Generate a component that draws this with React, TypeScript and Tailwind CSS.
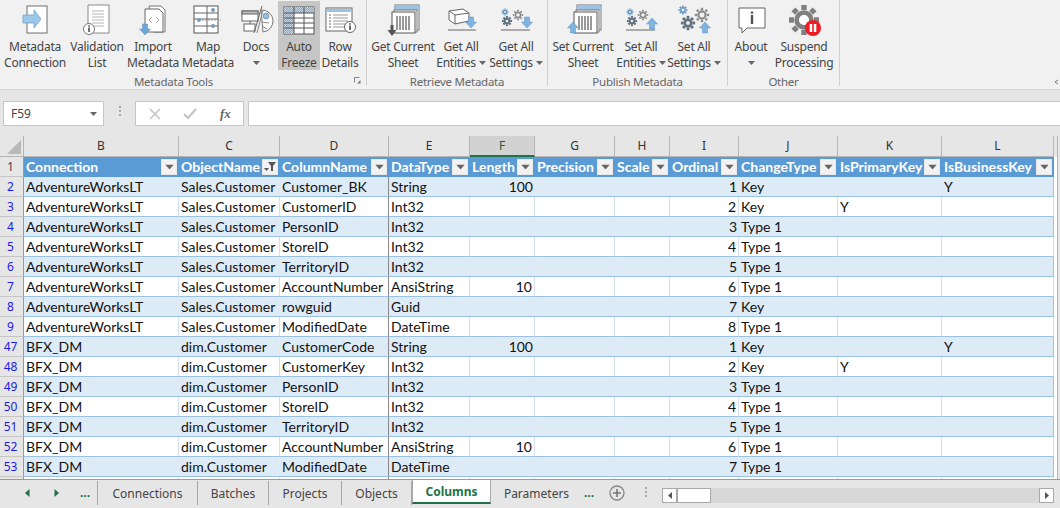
import React from "react";

const ui = "font-['Noto_Sans',sans-serif]";
const cellFont = "font-['Lato',sans-serif]";

const Caret = ({ className = "" }: { className?: string }) => (
  <svg width="7" height="4" viewBox="0 0 7 4" className={className}>
    <path d="M0 0h7L3.5 4z" fill="#666" />
  </svg>
);

const I = ({ children }: { children: React.ReactNode }) => (
  <svg width="40" height="38" viewBox="0 1 40 38">{children}</svg>
);

const gear = (cx: number, cy: number, r: number, stroke: string, sw: number) => {
  const teeth = [];
  for (let i = 0; i < 8; i++) {
    const a = (i * Math.PI) / 4;
    teeth.push(
      <line key={i} x1={cx + Math.cos(a) * r} y1={cy + Math.sin(a) * r} x2={cx + Math.cos(a) * (r + sw)} y2={cy + Math.sin(a) * (r + sw)} stroke={stroke} strokeWidth={sw * 1.1} />
    );
  }
  return (
    <g>
      {teeth}
      <circle cx={cx} cy={cy} r={r * 0.72} fill="#f1f1f1" stroke={stroke} strokeWidth={sw} />
    </g>
  );
};

const ArrowDown = ({ x, y, c = "#7fb4e0" }: { x: number; y: number; c?: string }) => (
  <path d={`M${x - 2.5} ${y}h5v5h3l-5.5 6-5.5-6h3z`} fill={c} stroke="#5d93c4" strokeWidth=".5" />
);
const ArrowUp = ({ x, y, c = "#7fb4e0" }: { x: number; y: number; c?: string }) => (
  <path d={`M${x - 2.5} ${y + 11}h5v-5h3l-5.5-6-5.5 6h3z`} fill={c} stroke="#5d93c4" strokeWidth=".5" />
);

const Sheet = ({ dx, arrow }: { dx: number; arrow?: React.ReactNode }) => (
  <I>
    <rect x={dx + 3} y="5" width="24" height="25" fill="#fff" stroke="#777" />
    <rect x={dx + 3} y="6" width="24" height="4" fill="#9cc3e5" />
    <rect x={dx + 2} y="10" width="23" height="22" fill="#fff" stroke="#777" />
    <rect x={dx} y="12" width="23" height="21" fill="#fff" stroke="#555" />
    {[5, 8, 11, 14, 17].map((x) => (
      <line key={x} x1={dx + x} x2={dx + x} y1="16" y2="30" stroke="#555" strokeWidth="1.2" />
    ))}
    {arrow}
  </I>
);

const Cube = () => (
  <g fill="#fff" stroke="#666">
    <path d="M4 7l14-2 6 4v8l-14 3-6-4z" />
    <path d="M4 7l6 4v9M10 11l14-2" fill="none" />
  </g>
);

const Gears = () => (
  <g>
    {gear(9, 12, 2.2, "#5d93c4", 1.2)}
    {gear(22, 15, 3.6, "#8a8a8a", 1.6)}
    {gear(11, 21, 3.2, "#5f6f7d", 1.9)}
  </g>
);

const icons: Record<string, React.ReactNode> = {
  conn: (
    <I>
      <rect x="12" y="6" width="20" height="27" fill="#fff" stroke="#6e6e6e" />
      <path d="M8 15h11v-5l7 9-7 9v-5H8z" fill="#9cc8ea" stroke="#6fa3cf" strokeWidth=".8" />
    </I>
  ),
  valid: (
    <I>
      <path d="M11 5h21v28H11z" fill="#fff" stroke="#8a8a8a" />
      {[11, 14, 17, 20, 23, 26].map((y) => (
        <line key={y} x1="15" x2="27" y1={y} y2={y} stroke="#b5b5b5" />
      ))}
      <circle cx="12" cy="29" r="5.5" fill="#fff" stroke="#777" />
      <rect x="11.2" y="27.5" width="1.7" height="4.5" fill="#555" />
      <rect x="11.2" y="25.3" width="1.7" height="1.4" fill="#555" />
    </I>
  ),
  imp: (
    <I>
      <path d="M16 6h12l4 4v22H20z" fill="#fff" stroke="#777" />
      <path d="M12 9h14l4 4v19H12z" fill="#fff" stroke="#666" />
      <path d="M19 17l-3 3 3 3M23 17l3 3-3 3" fill="none" stroke="#aaa" />
      <ArrowDown x={12} y={24} c="#6fa5d6" />
    </I>
  ),
  map: (
    <I>
      <rect x="6" y="6" width="24" height="27" fill="#fff" stroke="#555" />
      <path d="M6 13h24M6 19h24M6 26h24M19 6v27" stroke="#666" fill="none" />
      <line x1="11" x2="33" y1="20" y2="20" stroke="#999" strokeDasharray="2 1" />
      <circle cx="11" cy="20" r="2" fill="#6f9cc2" />
      <circle cx="25" cy="10" r="2" fill="#6f9cc2" />
      <circle cx="25" cy="26" r="2" fill="#6f9cc2" />
    </I>
  ),
  docs: (
    <I>
      <rect x="6" y="11" width="16" height="10" fill="#fff" stroke="#666" />
      <rect x="6" y="11" width="16" height="3" fill="#bbb" stroke="#666" />
      <rect x="8" y="24" width="11" height="7" fill="#fff" stroke="#666" />
      <path d="M14 21v3" stroke="#666" />
      <path d="M25 10a11 11 0 0 1 2 22z" fill="#fff" stroke="#777" />
      <line x1="18" y1="33" x2="26" y2="6" stroke="#666" />
      <line x1="21" y1="33" x2="27" y2="10" stroke="#888" />
      <circle cx="30" cy="16" r="3" fill="#8fbde3" stroke="#666" strokeWidth=".5" />
      <path d="M26 22l7 1M26 26l5 3" stroke="#888" />
    </I>
  ),
  freeze: (
    <I>
      <defs>
        <pattern id="hatch" width="2" height="2" patternUnits="userSpaceOnUse">
          <rect width="2" height="2" fill="#c4d6e6" />
          <rect width="1" height="1" fill="#8fa7bd" />
          <rect x="1" y="1" width="1" height="1" fill="#8fa7bd" />
        </pattern>
      </defs>
      <rect x="5" y="7" width="30" height="27" fill="#fff" stroke="#555" />
      <rect x="5" y="7" width="30" height="6" fill="url(#hatch)" />
      <rect x="5" y="13" width="10" height="21" fill="url(#hatch)" />
      <path d="M5 13h30M5 18h30M5 23h30M5 28h30M15 7v27M25 7v27" stroke="#555" fill="none" />
    </I>
  ),
  row: (
    <I>
      <rect x="6" y="8" width="26" height="23" fill="#fff" stroke="#666" />
      <rect x="6" y="9" width="26" height="3" fill="#9cc3e5" />
      {[15, 18, 21, 24, 27].map((y) => (
        <g key={y}>
          <line x1="9" x2="11" y1={y} y2={y} stroke="#666" />
          <line x1="13" x2="28" y1={y} y2={y} stroke="#999" />
        </g>
      ))}
      <circle cx="30" cy="27" r="5.5" fill="#fff" stroke="#666" />
      <rect x="29.2" y="25.5" width="1.7" height="4.5" fill="#555" />
      <rect x="29.2" y="23.3" width="1.7" height="1.4" fill="#555" />
    </I>
  ),
  getSheet: <Sheet dx={9} arrow={<path d="M7.5 25h3v5h3l-4.5 6-4.5-6h3z" fill="#555" />} />,
  getEnt: (
    <I>
      <g transform="translate(4 4)"><Cube /></g>
      <ArrowDown x={30} y={17} />
      <line x1="7" x2="35" y1="30" y2="30" stroke="#666" />
    </I>
  ),
  getSet: (
    <I>
      <Gears />
      <ArrowDown x={31} y={17} />
      <line x1="5" x2="34" y1="30" y2="30" stroke="#666" />
    </I>
  ),
  setSheet: <Sheet dx={11} arrow={<ArrowUp x={10} y={22} />} />,
  setEnt: (
    <I>
      <Gears />
      <ArrowUp x={31} y={18} />
      <line x1="5" x2="34" y1="30" y2="30" stroke="#666" />
    </I>
  ),
  setSet: (
    <I>
      {gear(9, 10, 3, "#5d93c4", 1.5)}
      {gear(28, 15, 5, "#8a8a8a", 2.2)}
      {gear(14, 23, 4.5, "#5f6f7d", 2.6)}
      <ArrowUp x={31} y={22} />
    </I>
  ),
  about: (
    <I>
      <path d="M8 8h26v20H16l-5 5v-5H8z" fill="#fff" stroke="#666" />
      <rect x="19.8" y="15" width="2.4" height="9" fill="#555" />
      <rect x="19.8" y="11.5" width="2.4" height="2.2" fill="#555" />
    </I>
  ),
  suspend: (
    <I>
      {gear(20, 20, 10, "#808080", 5)}
      <circle cx="20" cy="20" r="5" fill="#fff" />
      <circle cx="29" cy="28" r="8" fill="#ee1c25" />
      <rect x="25.7" y="24" width="2.5" height="8" fill="#fff" />
      <rect x="29.8" y="24" width="2.5" height="8" fill="#fff" />
    </I>
  ),
};

type Btn = { icon: string; l1: string; l2?: string; caret?: "below" | "inline"; w: string; ml?: string; active?: boolean };

const RibbonBtn = ({ b }: { b: Btn }) => (
  <div className={`flex flex-col items-center h-[70px] shrink-0 border-t border-t-[#f1f1f1] ${b.w} ${b.ml ?? ""} ${b.active ? "bg-[#c6c6c6]" : ""}`}>
    <div className="h-[38px] flex items-center justify-center">{icons[b.icon]}</div>
    <div className="h-[16px] leading-[16px] whitespace-nowrap">{b.l1}</div>
    <div className="h-[16px] leading-[16px] whitespace-nowrap flex items-center gap-[3px]">
      {b.l2}
      {b.caret && <Caret />}
    </div>
  </div>
);

const Group = ({ label, w, btns, launcher, labelPad }: { label: string; w: string; btns: Btn[]; launcher?: boolean; labelPad?: string }) => (
  <div className={`relative flex flex-col shrink-0 h-[86px] border-r border-[#d0d0d0] ${w}`}>
    <div className="flex">
      {btns.map((b) => (
        <RibbonBtn key={b.icon} b={b} />
      ))}
    </div>
    <div className={`text-center text-[11.5px] leading-[14px] mt-[5px] text-[#666] ${labelPad ?? ""}`}>{label}</div>
    {launcher && (
      <svg width="7" height="7" viewBox="0 0 7 7" className="absolute right-[5px] bottom-[2px]">
        <path d="M.5 .5h5M.5 .5v5" stroke="#888" fill="none" />
        <path d="M3 6.5h3.5V3z" fill="#777" />
      </svg>
    )}
  </div>
);

const Ribbon = () => (
  <div className={`${ui} h-[90px] bg-[#f1f1f1] border-b border-[#d4d4d4] text-[12px] tracking-[-0.25px] text-[#444] flex relative`}>
    <Group
      label="Metadata Tools"
      w="w-[367px]"
      labelPad="pr-[19px]"
      launcher
      btns={[
        { icon: "conn", l1: "Metadata", l2: "Connection", w: "w-[70px]" },
        { icon: "valid", l1: "Validation", l2: "List", w: "w-[54px]" },
        { icon: "imp", l1: "Import", l2: "Metadata", w: "w-[58px]" },
        { icon: "map", l1: "Map", l2: "Metadata", w: "w-[52px]" },
        { icon: "docs", l1: "Docs", caret: "below", w: "w-[44px]" },
        { icon: "freeze", l1: "Auto", l2: "Freeze", w: "w-[42px]", active: true },
        { icon: "row", l1: "Row", l2: "Details", w: "w-[40px]" },
      ]}
    />
    <Group
      label="Retrieve Metadata"
      w="w-[181px]"
      btns={[
        { icon: "getSheet", l1: "Get Current", l2: "Sheet", w: "w-[58px]", ml: "ml-[7px]" },
        { icon: "getEnt", l1: "Get All", l2: "Entities", caret: "inline", w: "w-[58px]" },
        { icon: "getSet", l1: "Get All", l2: "Settings", caret: "inline", w: "w-[52px]" },
      ]}
    />
    <Group
      label="Publish Metadata"
      w="w-[180px]"
      btns={[
        { icon: "setSheet", l1: "Set Current", l2: "Sheet", w: "w-[56px]", ml: "ml-[7px]" },
        { icon: "setEnt", l1: "Set All", l2: "Entities", caret: "inline", w: "w-[60px]" },
        { icon: "setSet", l1: "Set All", l2: "Settings", caret: "inline", w: "w-[46px]" },
      ]}
    />
    <Group
      label="Other"
      w="w-[112px]"
      btns={[
        { icon: "about", l1: "About", caret: "below", w: "w-[46px]" },
        { icon: "suspend", l1: "Suspend", l2: "Processing", w: "w-[60px]" },
      ]}
    />
    <svg width="6" height="6" viewBox="0 0 6 6" className="absolute right-0 bottom-[4px]">
      <path d="M4 1L1 3l3 2" stroke="#777" fill="none" />
    </svg>
  </div>
);

const FormulaBar = () => (
  <div className={`${ui} h-[46px] bg-[#e6e6e6] flex items-start pt-[11px] text-[#444]`}>
    <div className="ml-[3px] w-[101px] h-[25px] bg-white border border-[#c6c6c6] flex items-center justify-between pl-[7px] pr-[6px] text-[12px]">
      F59
      <Caret />
    </div>
    <div className="w-[31px] flex justify-center pt-[5px]">
      <div className="flex flex-col gap-[2px]">
        <div className="w-[2px] h-[2px] bg-[#a8a8a8]" />
        <div className="w-[2px] h-[2px] bg-[#a8a8a8]" />
        <div className="w-[2px] h-[2px] bg-[#a8a8a8]" />
      </div>
    </div>
    <div className="w-[109px] h-[25px] bg-white border border-[#c6c6c6] flex items-center">
      <svg width="12" height="12" viewBox="0 0 12 12" className="ml-[13px]">
        <path d="M1 1l10 10M11 1L1 11" stroke="#c2c2c2" strokeWidth="1.5" />
      </svg>
      <svg width="14" height="12" viewBox="0 0 14 12" className="ml-[22px]">
        <path d="M1 6l4 4 8-9" stroke="#c2c2c2" strokeWidth="2" fill="none" />
      </svg>
      <span className="ml-[23px] text-[13px] italic text-[#666] font-['Liberation_Serif',serif] font-bold">fx</span>
    </div>
    <div className="ml-[4px] flex-1 h-[25px] bg-white border-y border-l border-[#c6c6c6]" />
  </div>
);

const gridCols = "grid grid-cols-[24px_155px_101px_109px_81px_65px_80px_55px_69px_99px_104px_112px_1fr]";

const cols = ["B", "C", "D", "E", "F", "G", "H", "I", "J", "K", "L"];
const heads = ["Connection", "ObjectName", "ColumnName", "DataType", "Length", "Precision", "Scale", "Ordinal", "ChangeType", "IsPrimaryKey", "IsBusinessKey"];

const aw = "AdventureWorksLT";
const sc = "Sales.Customer";
const bf = "BFX_DM";
const dc = "dim.Customer";
const rows: [number, string, string, string, string, string, string, string, string, string][] = [
  [2, aw, sc, "Customer_BK", "String", "100", "1", "Key", "", "Y"],
  [3, aw, sc, "CustomerID", "Int32", "", "2", "Key", "Y", ""],
  [4, aw, sc, "PersonID", "Int32", "", "3", "Type 1", "", ""],
  [5, aw, sc, "StoreID", "Int32", "", "4", "Type 1", "", ""],
  [6, aw, sc, "TerritoryID", "Int32", "", "5", "Type 1", "", ""],
  [7, aw, sc, "AccountNumber", "AnsiString", "10", "6", "Type 1", "", ""],
  [8, aw, sc, "rowguid", "Guid", "", "7", "Key", "", ""],
  [9, aw, sc, "ModifiedDate", "DateTime", "", "8", "Type 1", "", ""],
  [47, bf, dc, "CustomerCode", "String", "100", "1", "Key", "", "Y"],
  [48, bf, dc, "CustomerKey", "Int32", "", "2", "Key", "Y", ""],
  [49, bf, dc, "PersonID", "Int32", "", "3", "Type 1", "", ""],
  [50, bf, dc, "StoreID", "Int32", "", "4", "Type 1", "", ""],
  [51, bf, dc, "TerritoryID", "Int32", "", "5", "Type 1", "", ""],
  [52, bf, dc, "AccountNumber", "AnsiString", "10", "6", "Type 1", "", ""],
  [53, bf, dc, "ModifiedDate", "DateTime", "", "7", "Type 1", "", ""],
];

const FilterBtn = ({ filtered }: { filtered?: boolean }) => (
  <div className="w-[16px] h-[16px] bg-[#f2f2f2] border border-[#e8e8e8] flex items-center justify-center shrink-0 mr-[1px]">
    {filtered ? (
      <svg width="13" height="11" viewBox="0 0 13 11">
        <path d="M0 7h5L2.5 10z" fill="#555" />
        <path d="M4 1h8L9 5v5H7V5z" fill="#555" />
      </svg>
    ) : (
      <Caret className="scale-125" />
    )}
  </div>
);

const Cell = ({ t, right, odd, last, dark }: { t: string; right?: boolean; odd: boolean; last?: boolean; dark?: boolean }) => (
  <div
    className={`h-[20px] border-b border-[#9bc2e6] overflow-visible whitespace-nowrap leading-[19px] px-[2px] ${right ? "text-right" : ""} ${
      dark ? "border-r border-r-[#8a8a8a]" : odd ? "" : "border-r border-r-[#d3dfee]"
    } ${last ? "border-r border-r-[#9bc2e6]" : ""} ${odd ? "bg-[#ddebf7]" : "bg-white"}`}
  >
    {t}
  </div>
);

const RowHead = ({ n, color }: { n: string; color: string }) => (
  <div className={`${ui} h-[20px] pr-[2px] bg-[#e6e6e6] border-r border-b border-r-[#9a9a9a] border-b-[#c6c6c6] text-[12px] leading-[19px] text-center ${color}`}>{n}</div>
);

const Filler = ({ head }: { head?: boolean }) => (
  <div className={`flex bg-[#e6e6e6] ${head ? "h-[21px]" : "h-[20px]"}`}>
    <div className={`w-[3px] ${head ? "bg-[#e6e6e6]" : "bg-white"}`} />
    <div className="w-px bg-[#b4b4b4]" />
  </div>
);

const Grid = () => (
  <div className={`${cellFont} h-[344px] overflow-hidden bg-white border-b border-[#9a9a9a] text-[14px] text-[#111]`}>
    <div className={gridCols}>
      <div className="h-[21px] bg-[#e6e6e6] border-r border-b border-[#b4b4b4] flex items-end justify-end p-[2px]">
        <svg width="14" height="14" viewBox="0 0 14 14">
          <path d="M14 0v14H0z" fill="#b9b9b9" />
        </svg>
      </div>
      {cols.map((c) => (
        <div
          key={c}
          className={`${ui} h-[21px] text-[12px] leading-[20px] text-center border-r border-[#b4b4b4] ${
            c === "F" ? "bg-[#d2d2d2] border-b-2 border-b-[#217346] text-[#1d5c3c]" : "bg-[#e6e6e6] border-b border-b-[#b4b4b4] text-[#333]"
          }`}
        >
          {c}
        </div>
      ))}
      <Filler head />

      <RowHead n="1" color="text-[#444]" />
      {heads.map((h, i) => (
        <div key={h} className="h-[20px] pb-[1px] bg-[#5b9bd5] text-white font-bold flex items-center justify-between pl-[2px] overflow-hidden border-r border-[#5b9bd5] whitespace-nowrap">
          <span>{h}</span>
          <FilterBtn filtered={i === 1} />
        </div>
      ))}
      <Filler />

      {rows.map((r, i) => {
        const odd = i % 2 === 0;
        return (
          <React.Fragment key={r[0]}>
            <RowHead n={String(r[0])} color="text-[#1a1ae6]" />
            <Cell t={r[1]} odd={odd} />
            <Cell t={r[2]} odd={odd} />
            <Cell t={r[3]} odd={odd} dark />
            <Cell t={r[4]} odd={odd} />
            <Cell t={r[5]} odd={odd} right />
            <Cell t="" odd={odd} />
            <Cell t="" odd={odd} />
            <Cell t={r[6]} odd={odd} right />
            <Cell t={r[7]} odd={odd} />
            <Cell t={r[8]} odd={odd} />
            <Cell t={r[9]} odd={odd} last />
            <Filler />
          </React.Fragment>
        );
      })}
      <div className="h-[20px] bg-[#e6e6e6] border-r border-r-[#9a9a9a]" />
      {cols.map((c) => (
        <div key={c} className={`h-[20px] bg-white border-r ${c === "D" ? "border-r-[#8a8a8a]" : "border-r-[#d3dfee]"}`} />
      ))}
      <Filler />
    </div>
  </div>
);

const Tab = ({ t, active, w }: { t: string; active?: boolean; w: string }) => (
  <div
    className={`${w} h-[24px] pt-[1px] flex items-center justify-center text-[12px] whitespace-nowrap shrink-0 ${
      active ? "bg-white font-bold text-[#217346] border-b-2 border-b-[#217346] border-x border-[#a8a8a8] -mt-[1px]" : "border-r border-[#a8a8a8] text-[#444]"
    }`}
  >
    {t}
  </div>
);

const Tabs = () => (
  <div className={`${ui} h-[28px] bg-[#e6e6e6] flex items-start pt-[1px]`}>
    <div className="w-[98px] h-[24px] flex items-center border-r border-[#a8a8a8] shrink-0">
      <svg width="5" height="8" viewBox="0 0 5 8" className="ml-[25px]">
        <path d="M4.5 0v8L0 4z" fill="#217346" />
      </svg>
      <svg width="5" height="8" viewBox="0 0 5 8" className="ml-[24px]">
        <path d="M.5 0v8L5 4z" fill="#217346" />
      </svg>
      <span className="ml-[21px] text-[#217346] text-[12px] font-bold leading-none">...</span>
    </div>
    <Tab t="Connections" w="w-[100px]" />
    <Tab t="Batches" w="w-[71px]" />
    <Tab t="Projects" w="w-[73px]" />
    <Tab t="Objects" w="w-[70px]" />
    <Tab t="Columns" active w="w-[79px]" />
    <div className="w-[91px] h-[24px] pt-[1px] flex items-center justify-center text-[12px] text-[#444] shrink-0">Parameters</div>
    <span className="ml-[2px] text-[#217346] text-[12px] font-bold leading-[24px] w-[16px]">...</span>
    <svg width="16" height="16" viewBox="0 0 16 16" className="ml-[9px] mt-[4px]">
      <circle cx="8" cy="8" r="7" fill="none" stroke="#888" strokeWidth="1.3" />
      <path d="M4 8h8M8 4v8" stroke="#777" strokeWidth="1.6" />
    </svg>
    <div className="ml-[20px] mt-[6px] flex flex-col gap-[2px]">
      <div className="w-[2px] h-[2px] bg-[#a8a8a8]" />
      <div className="w-[2px] h-[2px] bg-[#a8a8a8]" />
      <div className="w-[2px] h-[2px] bg-[#a8a8a8]" />
    </div>
    <div className="ml-[15px] mt-[7px] flex-1 mr-[6px] h-[15px] bg-[#d8d8d8] flex justify-between">
      <div className="flex">
        <div className="w-[15px] h-[15px] bg-white border border-[#a8a8a8] flex items-center justify-center">
          <svg width="4" height="7" viewBox="0 0 4 7"><path d="M4 0v7L0 3.5z" fill="#555" /></svg>
        </div>
        <div className="w-[34px] h-[15px] bg-white border border-[#a8a8a8]" />
      </div>
      <div className="w-[15px] h-[15px] bg-white border border-[#a8a8a8] flex items-center justify-center">
        <svg width="4" height="7" viewBox="0 0 4 7"><path d="M0 0v7l4-3.5z" fill="#555" /></svg>
      </div>
    </div>
  </div>
);

export default function App() {
  return (
    <div className="w-[1060px] h-[508px] overflow-hidden bg-[#e6e6e6]">
      <Ribbon />
      <FormulaBar />
      <Grid />
      <Tabs />
    </div>
  );
}
